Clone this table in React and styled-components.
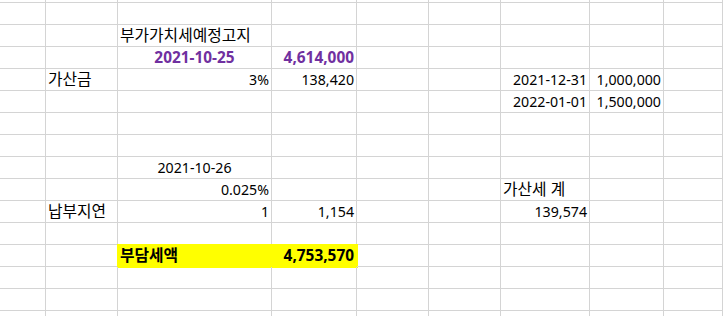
import React from "react";
import styled, { createGlobalStyle } from "styled-components";

const GlobalStyle = createGlobalStyle`
  html, body {
    margin: 0;
    padding: 0;
    background: #ffffff;
    overflow: hidden;
  }
  body {
    font-family: "Noto Sans", "Noto Sans CJK KR", sans-serif;
  }
`;

// column widths include the 1px gridline on the right
const COLS = "46px 72px 154px 85px 72px 72px 89px 74px 1fr";

const cellSize = (p) => {
  if (p.$ko) return "15.8px";
  if (p.$bold) return "15.4px";
  return "14.2px";
};

const Sheet = styled.div`
  width: 723px;
  height: 316px;
  overflow: hidden;
  display: flex;
  flex-direction: column;
`;

const Row = styled.div`
  display: grid;
  grid-template-columns: ${COLS};
  height: ${(p) => p.$h || 22}px;
  flex-shrink: 0;
`;

const Cell = styled.div`
  box-sizing: border-box;
  border-right: 1px solid #d4d4d4;
  border-bottom: 1px solid #d4d4d4;
  padding: 0 2px;
  font-size: ${cellSize};
  line-height: 21px;
  white-space: nowrap;
  overflow: visible;
  color: ${(p) => (p.$purple ? "#7030a0" : "#000000")};
  font-weight: ${(p) => (p.$bold ? 700 : 400)};
  text-align: ${(p) => p.$align || "left"};
  background: ${(p) => (p.$fill ? p.$fill : "transparent")};
  ${(p) =>
    p.$fill &&
    `border-color: ${p.$fill}; box-shadow: 0 0 0 1px ${p.$fill};`}
`;

const rows = [
  {},
  { C: { t: "부가가치세예정고지", ko: true } },
  {
    C: { t: "2021-10-25", align: "center", bold: true, purple: true },
    D: { t: "4,614,000", align: "right", bold: true, purple: true },
  },
  {
    B: { t: "가산금", ko: true },
    C: { t: "3%", align: "right" },
    D: { t: "138,420", align: "right" },
    G: { t: "2021-12-31", align: "right" },
    H: { t: "1,000,000", align: "right" },
  },
  {
    G: { t: "2022-01-01", align: "right" },
    H: { t: "1,500,000", align: "right" },
  },
  {},
  {},
  { C: { t: "2021-10-26", align: "center" } },
  {
    C: { t: "0.025%", align: "right" },
    G: { t: "가산세 계", ko: true },
  },
  {
    B: { t: "납부지연", ko: true },
    C: { t: "1", align: "right" },
    D: { t: "1,154", align: "right" },
    G: { t: "139,574", align: "right" },
  },
  {},
  {
    C: { t: "부담세액", bold: true, fill: "#ffff00", ko: true },
    D: { t: "4,753,570", align: "right", bold: true, fill: "#ffff00" },
  },
  {},
  {},
  {},
];

const LETTERS = ["A", "B", "C", "D", "E", "F", "G", "H", "I"];

export default function App() {
  return (
    <>
      <GlobalStyle />
      <Sheet>
        <Row $h={3}>
          {LETTERS.map((l) => (
            <Cell key={l} />
          ))}
        </Row>
        {rows.map((r, i) => (
          <Row key={i}>
            {LETTERS.map((l) => {
              const c = r[l];
              return (
                <Cell
                  key={l}
                  $align={c && c.align}
                  $bold={c && c.bold}
                  $purple={c && c.purple}
                  $fill={c && c.fill}
                  $ko={c && c.ko}
                >
                  {c ? c.t : null}
                </Cell>
              );
            })}
          </Row>
        ))}
      </Sheet>
    </>
  );
}
